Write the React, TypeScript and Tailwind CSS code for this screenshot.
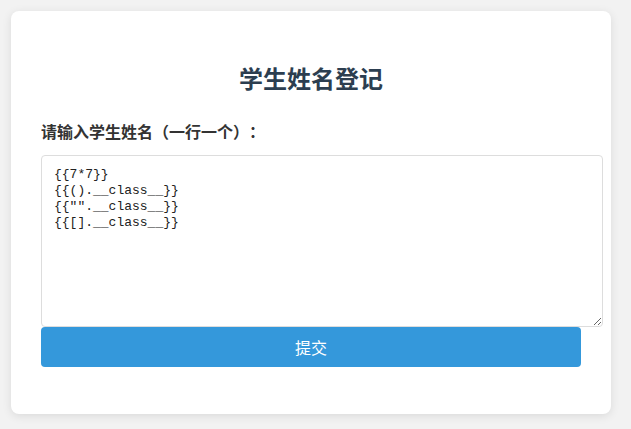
export default function App() {
  const names = '{{7*7}}\n{{().__class__}}\n{{"".__class__}}\n{{[].__class__}}';

  return (
    <div className="min-h-[429px] bg-[#f2f2f2] pl-[11px] pt-[11px] pb-[16px] font-['Liberation_Sans','Noto_Sans_CJK_SC',sans-serif]">
      <div className="w-[600px] rounded-[8px] bg-white px-[30px] pt-[30px] pb-[47px] shadow-[0_2px_10px_rgba(0,0,0,0.1)]">
        {/* Title */}
        <h2 className="mt-[24px] text-center text-[24px] font-bold leading-[29px] text-[#2c3e50]">
          学生姓名登记
        </h2>

        {/* Form */}
        <form onSubmit={(e) => e.preventDefault()}>
          <label className="mt-[25px] block font-['Noto_Sans_CJK_SC',sans-serif] text-[16px] font-bold leading-[24px] text-[#333] [text-spacing-trim:space-all]">
            请输入学生姓名（一行一个）：
          </label>
          <textarea
            defaultValue={names}
            className="mt-[12px] box-content block h-[149px] w-[538px] rounded-[4px] border border-[#ddd] pt-[11px] pb-[10px] pl-[12px] pr-[10px] font-['Liberation_Mono','Noto_Sans_CJK_SC',monospace] text-[13px] leading-[16px] text-[#222] outline-none"
          />
          <button
            type="submit"
            className="block h-[40px] w-full rounded-[4px] bg-[#3498db] pt-[3px] text-[16px] text-white"
          >
            提交
          </button>
        </form>
      </div>
    </div>
  );
}
